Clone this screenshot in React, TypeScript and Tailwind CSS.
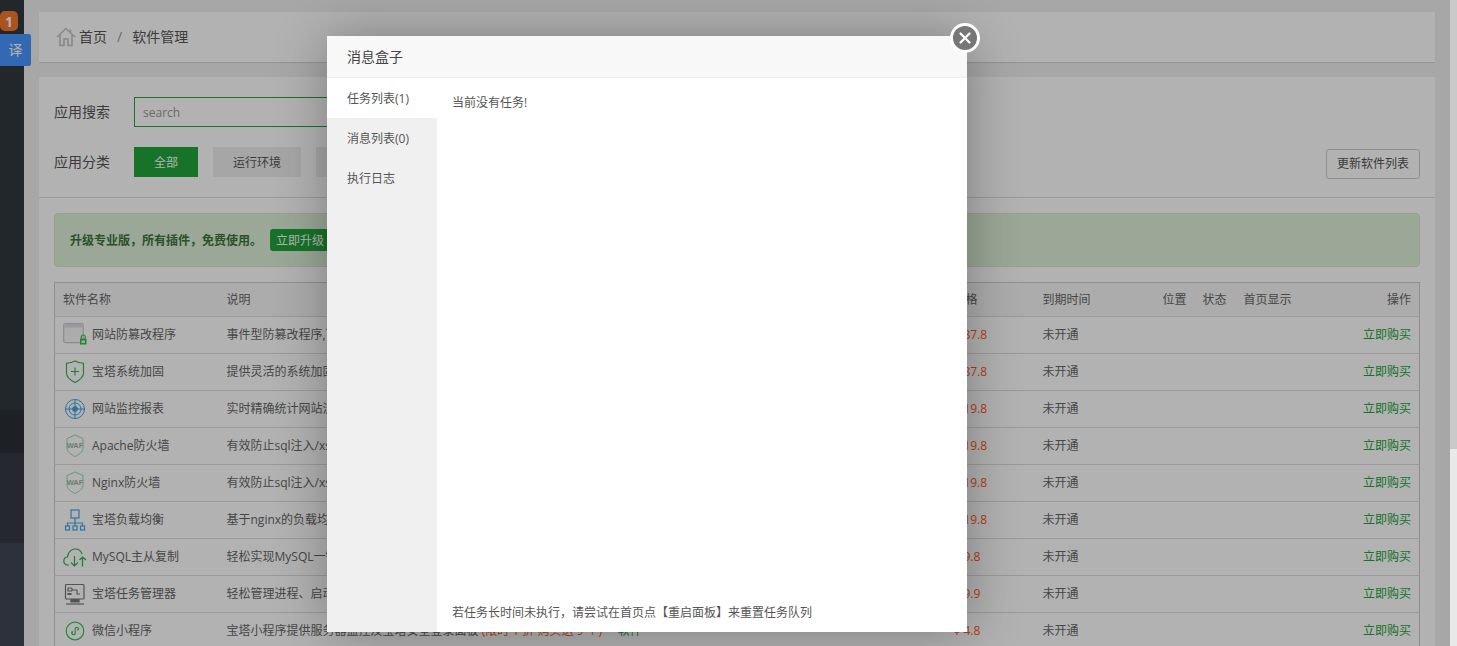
import { X } from 'lucide-react';
import type { ReactNode } from 'react';

const font = 'font-["Open_Sans","Liberation_Sans","Noto_Sans_CJK_SC",sans-serif]';

function HomeIcon() {
  return (
    <svg width="20" height="20" viewBox="0 0 20 20" fill="none" stroke="#c4c4c4" strokeWidth="1.6" className="mr-[3px]">
      <path d="M1 10 L10 1.5 L19 10" />
      <path d="M4 8 V18.5 H8 V12 H12 V18.5 H16 V8" />
      <path d="M14.5 2.5 V5.5" />
    </svg>
  );
}

function WindowIcon() {
  return (
    <svg width="24" height="24" viewBox="0 0 24 24" fill="none">
      <rect x="0.7" y="0.7" width="19.5" height="19" rx="2" stroke="#c8c8d2" strokeWidth="1.2" fill="#f6f6f8" />
      <rect x="1" y="1" width="19" height="3.5" fill="#dcdce2" />
      <rect x="17" y="15.5" width="6.5" height="6" fill="#2fc04b" />
      <path d="M18.3 15.5 V14 a2 2 0 0 1 4 0 V15.5" stroke="#2fc04b" strokeWidth="1.2" />
      <rect x="18.5" y="17.5" width="3.5" height="2.5" fill="#e8f6ea" />
    </svg>
  );
}

function ShieldIcon() {
  return (
    <svg width="24" height="24" viewBox="0 0 24 24" fill="none" stroke="#2fb24c" strokeWidth="1.1">
      <path d="M3.5 3.2 C7.5 3 10 2.2 12 1 C14 2.2 16.5 3 20.5 3.2 V13 C20.5 17.5 16 20.5 12 22.5 C8 20.5 3.5 17.5 3.5 13 Z" />
      <path d="M12 7.5 V15.5 M8 11.5 H16" />
    </svg>
  );
}

function TargetIcon() {
  return (
    <svg width="24" height="24" viewBox="0 0 24 24" fill="none" stroke="#41a7e2" strokeWidth="1">
      <circle cx="12" cy="12" r="9.5" />
      <circle cx="12" cy="12" r="6" />
      <circle cx="12" cy="12" r="2.5" fill="#41a7e2" />
      <path d="M12 2 V22 M2 12 H22" />
    </svg>
  );
}

function WafIcon() {
  return (
    <svg width="24" height="24" viewBox="0 0 24 24" fill="none">
      <path d="M4 4.6 L12 1 L20 4.6 V14 C20 18 16 20.5 12 22.5 C8 20.5 4 18 4 14 Z" stroke="#8fd49f" strokeWidth="0.9" />
      <text x="12" y="14" textAnchor="middle" fontSize="7.5" fontWeight="700" fontFamily="Liberation Sans" fill="#9db4a4">
        WAF
      </text>
    </svg>
  );
}

function TreeIcon() {
  return (
    <svg width="24" height="24" viewBox="0 0 24 24" fill="none" stroke="#41a7e2" strokeWidth="1.2">
      <rect x="8" y="2" width="8" height="8" />
      <path d="M12 10 V15 M4.5 18 V15 H19.5 V18 M12 15 V18" />
      <rect x="2.5" y="18" width="4" height="4" />
      <rect x="10" y="18" width="4" height="4" />
      <rect x="17.5" y="18" width="4" height="4" />
    </svg>
  );
}

function CloudIcon() {
  return (
    <svg width="24" height="24" viewBox="0 0 24 24" fill="none" stroke="#2fb24c" strokeWidth="1.2">
      <path d="M6 20 H4.5 C2 20 0.8 17.8 0.8 16 C0.8 13.8 2.4 12 4.5 12 C5 7 8.5 4 12 4 C15.5 4 18 6 19 9" />
      <path d="M11.5 11 V21 M8 17.5 L11.5 21 L15 17.5" />
      <path d="M19.5 21.5 V12 M16.5 15 L19.5 12 L23 15" />
    </svg>
  );
}

function MonitorIcon() {
  return (
    <svg width="24" height="24" viewBox="0 0 24 24" fill="none" stroke="#777" strokeWidth="1.2">
      <rect x="2.5" y="2.5" width="18.5" height="14.5" rx="1" />
      <path d="M5 6 H9 M5 6 V9 H9 M9 6 V9 M9 8 H14 V12 H17" />
      <rect x="4.5" y="11" width="4" height="2" fill="#777" stroke="none" />
      <path d="M8 17 V20 H16 V17" fill="#777" />
      <path d="M3 22 H21" />
    </svg>
  );
}

function MiniAppIcon() {
  return (
    <svg width="24" height="24" viewBox="0 0 24 24" fill="none" stroke="#3cc45a" strokeWidth="1.2">
      <circle cx="12" cy="12" r="8.8" />
      <path d="M8.8 12.5 V14.5 A1.8 1.8 0 0 0 12.2 14.5 V9.5 A1.8 1.8 0 0 1 15.6 9.5 A1.8 1.8 0 0 1 14.3 11.2" />
      <path d="M10.2 12.6 A1.8 1.8 0 0 0 8.8 14" />
    </svg>
  );
}

type Row = {
  icon: ReactNode;
  name: string;
  desc: ReactNode;
  price: string;
};

const rows: Row[] = [
  { icon: <WindowIcon />, name: '网站防篡改程序', desc: '事件型防篡改程序,可有效保护网站重要文件不被木马篡改', price: '87.8' },
  { icon: <ShieldIcon />, name: '宝塔系统加固', desc: '提供灵活的系统加固功能,防止服务器被植入挖矿程序', price: '87.8' },
  { icon: <TargetIcon />, name: '网站监控报表', desc: '实时精确统计网站流量、IP、UV、PV、请求、蜘蛛等数据', price: '19.8' },
  { icon: <WafIcon />, name: 'Apache防火墙', desc: '有效防止sql注入/xss/一句话木马等常见渗透攻击', price: '19.8' },
  { icon: <WafIcon />, name: 'Nginx防火墙', desc: '有效防止sql注入/xss/一句话木马等常见渗透攻击', price: '19.8' },
  { icon: <TreeIcon />, name: '宝塔负载均衡', desc: '基于nginx的负载均衡,轻松实现多节点部署', price: '19.8' },
  { icon: <CloudIcon />, name: 'MySQL主从复制', desc: '轻松实现MySQL一键主从复制,支持多从库', price: '9.8' },
  { icon: <MonitorIcon />, name: '宝塔任务管理器', desc: '轻松管理进程、启动项、计划任务、服务和用户', price: '9.9' },
  {
    icon: <MiniAppIcon />,
    name: '微信小程序',
    desc: (
      <>
        宝塔小程序提供服务器监控及宝塔安全登录面板 <span className="text-[#ff5722]">(限时 1 折 购买送 9 个)</span> · · <span className="text-[#20a53a]">软件</span>
      </>
    ),
    price: '4.8',
  },
];

function Sidebar() {
  return (
    <div className="w-[24px] shrink-0 flex flex-col">
      <div className="h-[410px] bg-[#32393f]" />
      <div className="h-[43px] bg-[#2a2f35]" />
      <div className="h-[90px] bg-[#363c44]" />
      <div className="flex-1 bg-[#404755]" />
    </div>
  );
}

function Breadcrumb() {
  return (
    <div className="h-[50px] bg-white shadow-[0_1px_1px_rgba(0,0,0,0.1)] flex items-center pl-[17px] pb-[1px] text-[14px] text-[#555]">
      <HomeIcon />
      <span>首页</span>
      <span className="mx-[10px] text-[#999]">/</span>
      <span>软件管理</span>
    </div>
  );
}

function SearchBar() {
  return (
    <div className="h-[121px] border-b border-[#ddd] px-[15px] pt-[20px]">
      <div className="flex items-center h-[30px] text-[14px] text-[#555]">
        <span className="w-[80px] pb-[1px]">应用搜索</span>
        <input
          readOnly
          placeholder="search"
          className="w-[420px] h-[30px] border border-[#20a53a] px-[8px] text-[12px] outline-none placeholder:text-[#999]"
        />
      </div>
      <div className="flex items-center mt-[20px] h-[30px] text-[14px] text-[#555]">
        <span className="w-[80px] pb-[1px]">应用分类</span>
        <div className="flex gap-[15px] text-[12px]">
          <span className="w-[64px] h-[30px] pt-[1px] flex items-center justify-center bg-[#20a53a] text-white">全部</span>
          <span className="w-[88px] h-[30px] pt-[1px] flex items-center justify-center bg-[#eee]">运行环境</span>
          <span className="w-[88px] h-[30px] pt-[1px] flex items-center justify-center bg-[#eee]">系统工具</span>
        </div>
        <span className="ml-auto mt-[4px] w-[94px] h-[30px] flex items-center justify-center border border-[#ccc] rounded-[3px] text-[12px]">
          更新软件列表
        </span>
      </div>
    </div>
  );
}

function Notice() {
  return (
    <div className="h-[54px] bg-[#dff0d8] border border-[#d6e9c6] rounded-[4px] flex items-center pl-[15px] text-[12px]">
      <span className="font-bold text-[#3c763d] pt-[1px]">升级专业版，所有插件，免费使用。</span>
      <span className="ml-[8px] w-[80px] h-[22px] pt-[1px] flex items-center pl-[6px] bg-[#20a53a] text-white rounded-[3px]">立即升级</span>
    </div>
  );
}

function SoftTable() {
  return (
    <table className="w-[1366px] table-fixed border-collapse border border-[#ccc] mt-[15px] text-[12px] text-[#666]">
      <colgroup>
        <col className="w-[164px]" />
        <col className="w-[727px]" />
        <col className="w-[89px]" />
        <col className="w-[120px]" />
        <col className="w-[40px]" />
        <col className="w-[40px]" />
        <col className="w-[80px]" />
        <col />
      </colgroup>
      <thead>
        <tr className="h-[34px] bg-[#f6f6f6] border-b border-[#ddd] text-left">
          <th className="font-normal pl-[8px] pt-[1px]">软件名称</th>
          <th className="font-normal pl-[8px] pt-[1px]">说明</th>
          <th className="font-normal pl-[8px] pt-[1px]">价格</th>
          <th className="font-normal pl-[8px] pt-[1px]">到期时间</th>
          <th className="font-normal pl-[8px] pt-[1px]">位置</th>
          <th className="font-normal pl-[8px] pt-[1px]">状态</th>
          <th className="font-normal pl-[9px] pt-[1px]">首页显示</th>
          <th className="font-normal pr-[8px] pt-[1px] text-right">操作</th>
        </tr>
      </thead>
      <tbody>
        {rows.map((r) => (
          <tr key={r.name} className="h-[37px] border-b border-[#ddd]">
            <td className="pl-[8px]">
              <div className="flex items-center gap-[5px]">
                {r.icon}
                <span className="whitespace-nowrap">{r.name}</span>
              </div>
            </td>
            <td className="pl-[8px] whitespace-nowrap overflow-hidden">{r.desc}</td>
            <td className="pl-[8px] text-[#ff5722] whitespace-nowrap">
              <span className="mr-[3px]">¥</span>
              {r.price}
            </td>
            <td className="pl-[8px]">未开通</td>
            <td />
            <td />
            <td />
            <td className="pr-[8px] text-right text-[#20a53a]">立即购买</td>
          </tr>
        ))}
      </tbody>
    </table>
  );
}

function MessageBox() {
  return (
    <div className="absolute left-[327px] top-[36px] w-[640px] h-[596px] bg-white shadow-[1px_1px_50px_rgba(0,0,0,0.3)] flex flex-col">
      <div className="h-[42px] shrink-0 bg-[#f8f8f8] border-b border-[#eee] flex items-center pl-[20px] text-[14px] text-[#444]">
        消息盒子
      </div>
      <div className="flex-1 flex min-h-0">
        <div className="w-[110px] shrink-0 bg-[#f0f0f0] text-[12px] text-[#555]">
          <div className="h-[40px] pt-[1px] bg-white flex items-center pl-[20px]">任务列表(1)</div>
          <div className="h-[40px] pt-[1px] flex items-center pl-[20px]">消息列表(0)</div>
          <div className="h-[40px] pt-[1px] flex items-center pl-[20px]">执行日志</div>
        </div>
        <div className="flex-1 flex flex-col justify-between pl-[15px] pt-[16px] pb-[10px] text-[12px] text-[#555]">
          <span>当前没有任务!</span>
          <span>若任务长时间未执行，请尝试在首页点【重启面板】来重置任务队列</span>
        </div>
      </div>
      <div className="absolute -right-[13px] -top-[13px] w-[30px] h-[30px] rounded-full border-[3px] border-white bg-[#777] flex items-center justify-center">
        <X size={18} strokeWidth={3} color="#fff" />
      </div>
    </div>
  );
}

export default function App() {
  return (
    <div className={`${font} w-full h-[646px] overflow-hidden flex bg-[#e8e8e8]`}>
      <div className="relative flex-1 flex min-w-0 h-full bg-[#f0f0f0] overflow-hidden">
        <Sidebar />
        <div className="flex-1 min-w-0 px-[15px] pt-[12px]">
          <Breadcrumb />
          <div className="mt-[15px] bg-white">
            <SearchBar />
            <div className="px-[15px] pt-[15px]">
              <Notice />
              <SoftTable />
            </div>
          </div>
        </div>
        <div className="absolute left-0 top-[11px] w-[18px] h-[20px] rounded-[5px] bg-[#f5782c] text-white text-[14px] font-bold flex items-center justify-center">
          1
        </div>
        <div className="absolute left-0 top-[34px] w-[31px] h-[32px] pb-[2px] rounded-r-[2px] bg-[#4a95ff] text-white text-[14px] flex items-center justify-center">
          译
        </div>
        <div className="absolute inset-0 bg-black/30" />
        <MessageBox />
      </div>
      <div className="w-[7px] shrink-0 flex flex-col">
        <div className="h-[449px] bg-[#c9c9c9]" />
        <div className="flex-1 bg-[#e9e9e9]" />
      </div>
    </div>
  );
}
